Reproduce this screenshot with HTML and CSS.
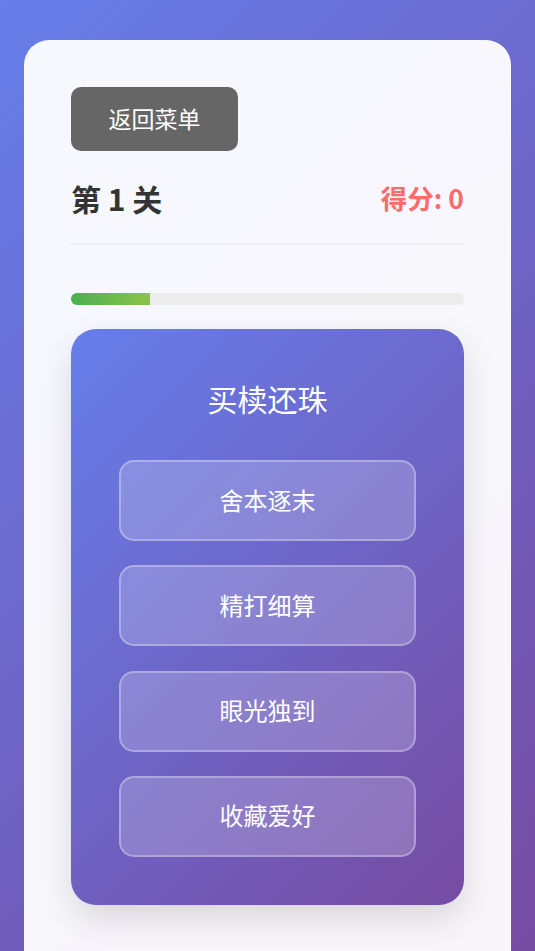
FILE: index.html
```html
<!DOCTYPE html>
<html lang="zh-CN">
<head>
<meta charset="utf-8">
<title>成语挑战</title>
<link rel="stylesheet" href="styles.css">
</head>
<body>
<div class="page">
  <div class="card">
    <button class="back-btn">返回菜单</button>
    <div class="header">
      <div class="level">第 1 关</div>
      <div class="score">得分: 0</div>
    </div>
    <div class="progress"><div class="progress-fill" style="width: 20%"></div></div>
    <div class="question-card">
      <div class="question">买椟还珠</div>
      <div class="options">
        <button class="option">舍本逐末</button>
        <button class="option">精打细算</button>
        <button class="option">眼光独到</button>
        <button class="option">收藏爱好</button>
      </div>
    </div>
  </div>
</div>
</body>
</html>
```

FILE: styles.css
```css
html, body {
  margin: 0;
  padding: 0;
  height: 100%;
}
body {
  font-family: "Noto Sans CJK SC", "Noto Sans", sans-serif;
  background: linear-gradient(135deg, #667eea 0%, #764ba2 100%);
  overflow: hidden;
}
.page {
  padding: 40px 24px 0;
  box-sizing: border-box;
  height: 100%;
}
.card {
  background: rgba(255, 255, 255, 0.95);
  border-radius: 25px 25px 0 0;
  padding: 47px 47px 0;
  min-height: 1000px;
  box-sizing: border-box;
}
.back-btn {
  display: block;
  width: 167px;
  height: 64px;
  border: none;
  border-radius: 10px;
  background: #666666;
  color: #ffffff;
  font-family: inherit;
  font-size: 23px;
  line-height: 30px;
  padding: 0 0 3px;
}
.header {
  display: flex;
  justify-content: space-between;
  align-items: center;
  margin-top: 27px;
  padding-bottom: 25px;
  border-bottom: 2px solid #eeeef2;
  font-weight: 700;
  line-height: 40px;
}
.level {
  color: #333333;
  font-size: 30px;
}
.score {
  color: #ff6b6b;
  font-size: 26.5px;
}
.progress {
  margin-top: 48px;
  height: 12px;
  border-radius: 6px;
  background: #ececec;
  overflow: hidden;
}
.progress-fill {
  height: 100%;
  background: linear-gradient(90deg, #4caf50, #8bc34a);
}
.question-card {
  margin-top: 24px;
  background: linear-gradient(135deg, #667eea 0%, #764ba2 100%);
  border-radius: 25px;
  padding: 48px 48px 48px;
  box-shadow: 0 15px 35px rgba(0, 0, 0, 0.12);
}
.question {
  color: #ffffff;
  font-size: 30px;
  line-height: 42px;
  text-align: center;
}
.options {
  margin-top: 41px;
  display: flex;
  flex-direction: column;
  gap: 24.3px;
}
.option {
  display: block;
  width: 100%;
  height: 81px;
  box-sizing: border-box;
  border: 2px solid rgba(255, 255, 255, 0.3);
  border-radius: 15px;
  background: rgba(255, 255, 255, 0.2);
  color: #ffffff;
  font-family: inherit;
  font-size: 24px;
  line-height: 32px;
  padding: 0 0 2px;
}
```
